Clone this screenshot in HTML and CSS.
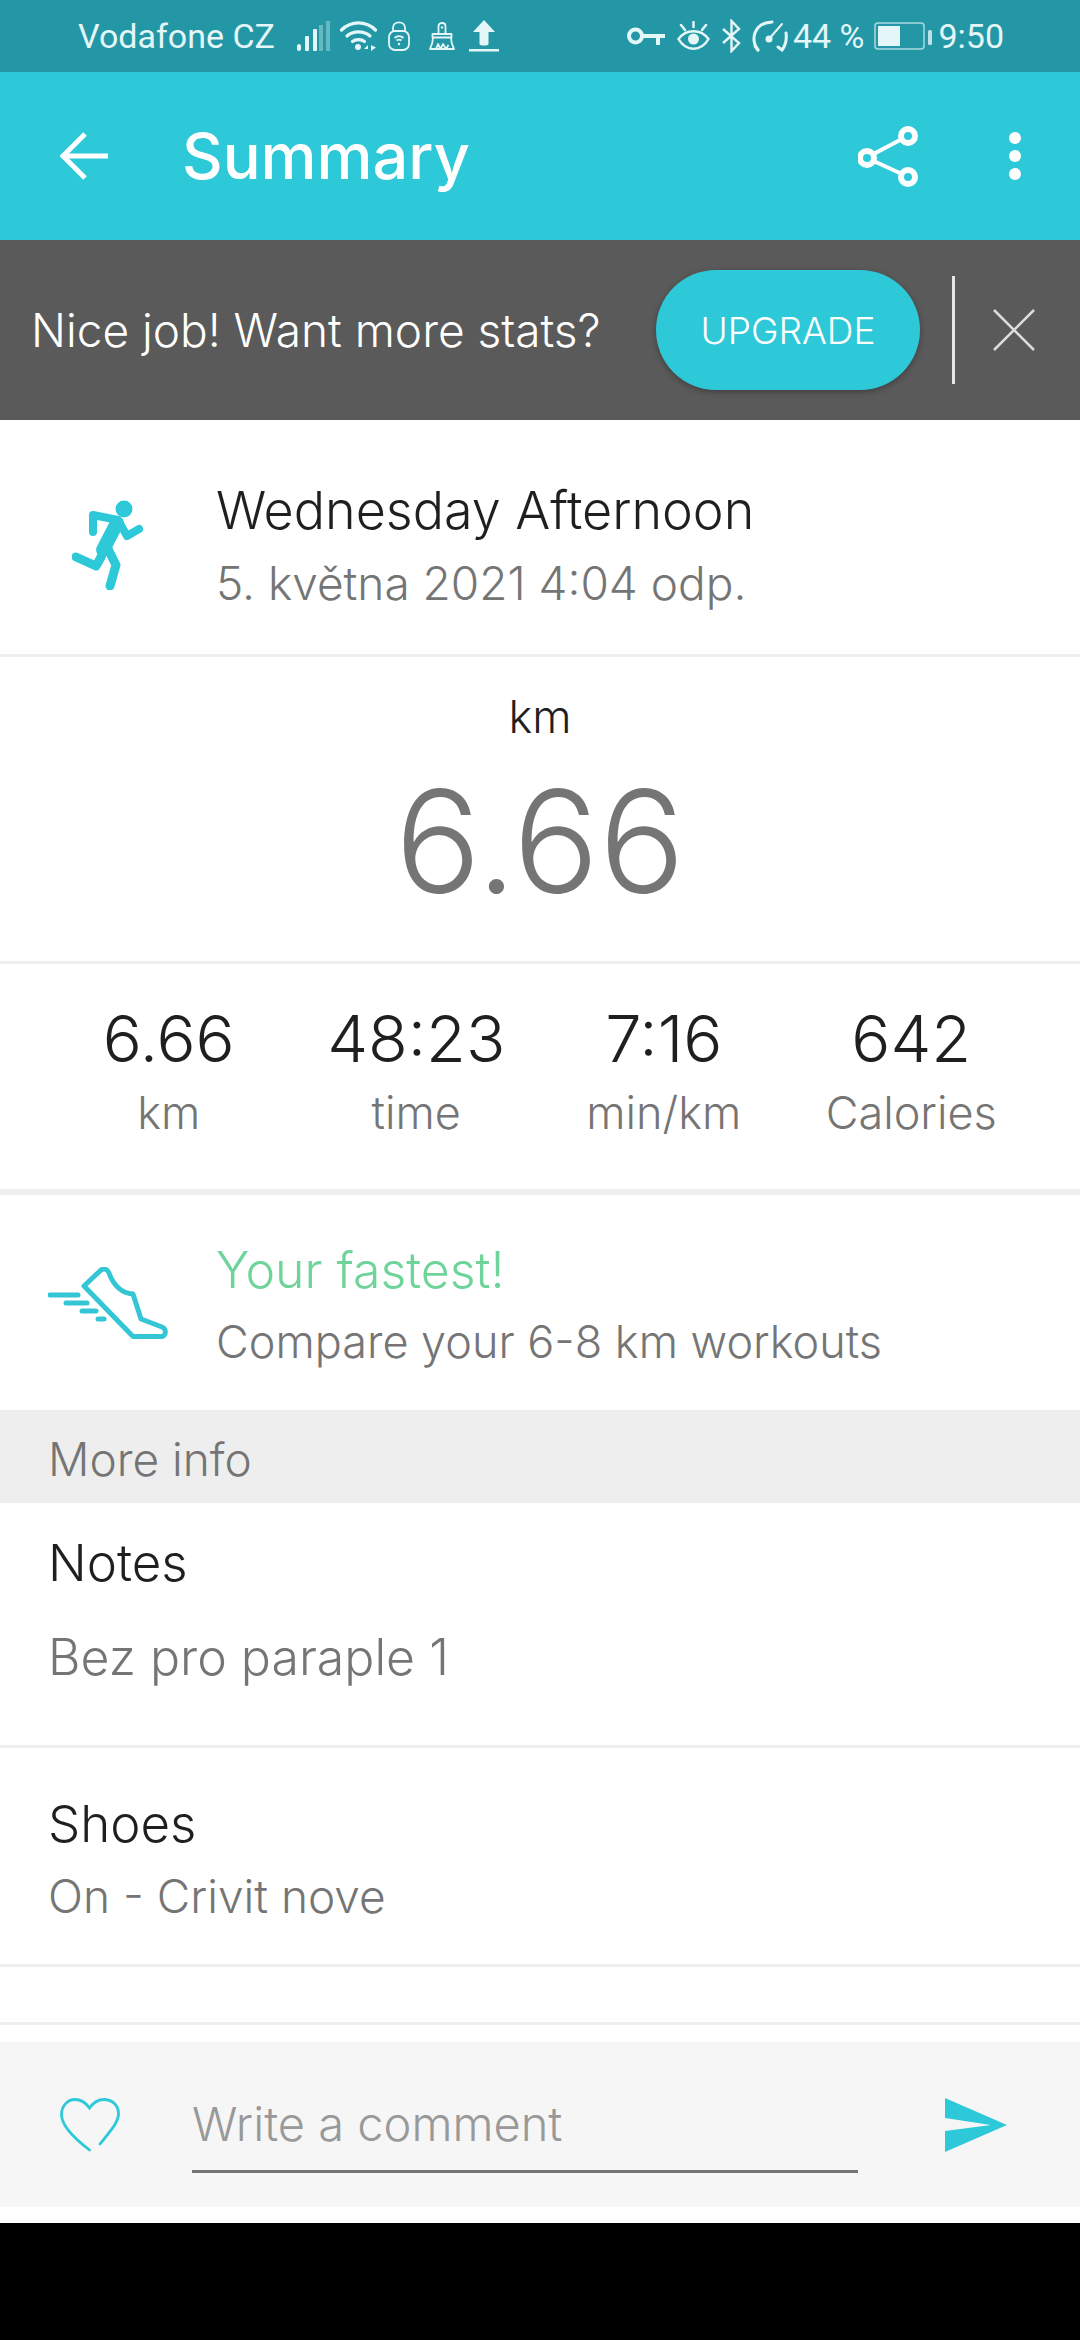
FILE: index.html
```html
<!DOCTYPE html>
<html lang="en">
<head>
  <meta charset="UTF-8">
  <title>Summary</title>
  <link rel="stylesheet" href="styles.css">
</head>
<body>
  <div class="status-bar">
    <div class="status-left">
      <span>Vodafone CZ</span>
      <svg class="st-signal" width="33" height="30" viewBox="0 0 33 30" fill="currentColor">
        <rect x="0" y="23" width="4" height="7" rx="2"/><rect x="8" y="15" width="4" height="15" rx="1"/><rect x="16" y="8" width="4" height="22" rx="1"/><rect x="22" y="4" width="4" height="26" opacity=".35"/><rect x="29" y="0" width="4" height="30" opacity=".35"/>
      </svg>
      <svg class="st-wifi" width="37" height="30" viewBox="0 0 37 30" fill="none" stroke="currentColor" stroke-width="3.200" stroke-linecap="round">
        <path d="M1.500 9C11 -0.500 26 -0.500 35.500 9"/><path d="M7 15C13 9.500 24 9.500 30 15"/><path d="M12.500 20.500C15.500 18 21.500 18 24.500 20.500"/><circle cx="18" cy="26" r="3" fill="currentColor" stroke="none"/>
        <path d="M28 24L24 28H28ZM31 24V30L36 26.500Z" fill="currentColor" stroke="none"/>
      </svg>
      <svg class="st-lock" width="22" height="30" viewBox="0 0 22 30" fill="none" stroke="currentColor" stroke-width="1.800">
        <rect x="1" y="10" width="20" height="19" rx="6"/><path d="M5 10V7C5 -0.500 17 -0.500 17 7V10"/><path d="M6.500 17C9 14.500 13 14.500 15.500 17M8.500 19.500C10 18.500 12 18.500 13.500 19.500"/><circle cx="11" cy="23" r="1.200" fill="currentColor" stroke="none"/>
      </svg>
      <svg class="st-brush" width="26" height="28" viewBox="0 0 26 28" fill="none" stroke="currentColor" stroke-width="1.800" stroke-linejoin="round">
        <path d="M9.500 12V4C9.500 0 16.500 0 16.500 4V12"/><rect x="3.500" y="12" width="19" height="3.500"/><path d="M4 15.500C4 21 2.500 24 1 27H25C23.500 24 22 21 22 15.500"/><path d="M7 27L9 22L11.500 27L14 22L17 27L19.500 23"/><circle cx="13" cy="5.500" r="1.200" fill="currentColor" stroke="none"/>
      </svg>
      <svg width="30" height="32" viewBox="0 0 30 32" fill="currentColor">
        <path d="M15 0L26 12H19.500V24C19.500 26 10.500 26 10.500 24V12H4Z"/><rect x="0" y="29" width="30" height="2.500"/>
      </svg>
    </div>
    <div class="status-right">
      <svg width="38" height="18" viewBox="0 0 38 18" fill="none" stroke="currentColor" stroke-width="4">
        <circle cx="8.500" cy="9" r="6.500"/><path d="M15 9H38M31 9V18" />
      </svg>
      <svg class="st-eye" width="33" height="30" viewBox="0 0 33 30" fill="none" stroke="currentColor" stroke-width="2.500" stroke-linecap="round">
        <path d="M1.500 18C9 7.500 24 7.500 31.500 18C24 31 9 31 1.500 18Z"/><circle cx="16.500" cy="18" r="5.500" fill="currentColor" stroke="none"/><path d="M16.500 1V6M4 4L8 9M29 4L25 9"/>
      </svg>
      <svg class="st-bt" width="19" height="34" viewBox="0 0 19 34" fill="none" stroke="currentColor" stroke-width="2.400">
        <path d="M1 10L17 24L9.500 32V2L17 10L1 24"/>
      </svg>
      <svg width="37" height="34" viewBox="0 0 37 34" fill="none" stroke="currentColor" stroke-width="3" stroke-linecap="round">
        <path d="M7 31C-1 20 3 4 21 3"/><path d="M35 14C36 21 34 27 31 31L27 28"/><path d="M7 31L4 27"/><circle cx="18" cy="20" r="3.500" fill="currentColor" stroke="none"/><path d="M18 20L31 5" stroke-width="2"/>
      </svg>
      <span class="st-pct">44 %</span>
      <svg width="58" height="28" viewBox="0 0 58 28" fill="none">
        <rect x="1" y="1" width="49" height="26" rx="3" stroke="currentColor" stroke-width="1.500" opacity=".7"/><rect x="4" y="4" width="22" height="20" fill="currentColor"/><rect x="54" y="8" width="4" height="15" rx="1.500" fill="currentColor" opacity=".8"/>
      </svg>
      <span class="st-time">9:50</span>
    </div>
  </div>

  <header class="app-bar">
    <svg class="back" width="48" height="48" viewBox="0 0 48 48" fill="none" stroke="#fff" stroke-width="5">
      <path d="M48 24H3M25 2L3 24L25 46"/>
    </svg>
    <h1>Summary</h1>
    <svg class="share" width="62" height="62" viewBox="0 0 62 62" fill="none" stroke="#fff" stroke-width="6">
      <circle cx="50" cy="11" r="7"/><circle cx="9" cy="33" r="7"/><circle cx="50" cy="52" r="7"/><path d="M15.500 29L44 14M15.500 36L44 49" stroke-width="4"/>
    </svg>
    <svg class="more" width="12" height="48" viewBox="0 0 12 48" fill="#fff">
      <circle cx="6" cy="6" r="6"/><circle cx="6" cy="24" r="6"/><circle cx="6" cy="42" r="6"/>
    </svg>
  </header>

  <div class="banner">
    <span class="banner-text">Nice job! Want more stats?</span>
    <button class="upgrade">UPGRADE</button>
    <div class="banner-sep"></div>
    <svg class="banner-close" width="42" height="42" viewBox="0 0 42 42" fill="none" stroke="#ddd" stroke-width="2.500">
      <path d="M1 1L41 41M41 1L1 41"/>
    </svg>
  </div>

  <section class="activity">
    <svg class="runner" width="71" height="90" viewBox="0 0 71 90" fill="none" stroke="#2ec9d8" stroke-width="8" stroke-linecap="round" stroke-linejoin="round">
      <circle cx="52" cy="9" r="8.500" fill="#2ec9d8" stroke="none"/>
      <path d="M21 32V15L46 20L55 36L67 29"/>
      <path d="M45 23L31 50" stroke-width="14"/>
      <path d="M46 21L28 59L24 66L4 57" stroke-width="9"/>
      <path d="M35 47L44 65L38 86" stroke-width="9"/>
    </svg>
    <div class="activity-text">
      <div class="title">Wednesday Afternoon</div>
      <div class="sub">5. května 2021 4:04 odp.</div>
    </div>
  </section>

  <section class="distance">
    <div class="unit">km</div>
    <div class="big">6.66</div>
  </section>

  <section class="stats">
    <div class="stat"><div class="val">6.66</div><div class="lbl">km</div></div>
    <div class="stat"><div class="val">48:23</div><div class="lbl">time</div></div>
    <div class="stat"><div class="val">7:16</div><div class="lbl">min/km</div></div>
    <div class="stat"><div class="val">642</div><div class="lbl">Calories</div></div>
  </section>

  <section class="fastest">
    <svg class="shoe" width="120" height="72" viewBox="0 0 120 72" fill="none" stroke="#35c6d6" stroke-width="5" stroke-linecap="round" stroke-linejoin="round">
      <path d="M36 19L53 3C56 1 59 2 61 6C65 17 72 26 85 27L93 52L114 60C119 62 118 70 113 69.500H85Z"/>
      <path d="M2 28H30M18 36H39M34 44H48M50 52H56"/>
    </svg>
    <div class="fastest-text">
      <div class="fast-title">Your fastest!</div>
      <div class="sub compare">Compare your 6-8 km workouts</div>
    </div>
  </section>

  <div class="more-info">More info</div>

  <section class="notes">
    <div class="row-title">Notes</div>
    <div class="notes-text">Bez pro paraple 1</div>
  </section>

  <section class="shoes">
    <div class="row-title">Shoes</div>
    <div class="sub">On - Crivit nove</div>
  </section>

  <div class="empty-row"></div>

  <div class="comment-bar">
    <svg class="heart" width="60" height="54" viewBox="0 0 60 54" fill="none" stroke="#2ec9d8" stroke-width="2.800" stroke-linecap="round">
      <path d="M40 46C51 32 59 24 58.500 15C58 6 51 1.500 44 1.500C38 1.500 33 5 29.500 10C26 5 21 1.500 15 1.500C8 1.500 2 7 1.500 16C1 28 15 41 29.500 52"/>
    </svg>
    <div class="comment-input">Write a comment</div>
    <svg class="send" width="62" height="54" viewBox="0 0 62 54" fill="#2ec9d8">
      <polygon points="0,0 62,27 0,54 0,33 46,27 0,20"/>
    </svg>
  </div>

  <div class="nav-space"></div>
</body>
</html>
```

FILE: styles.css
```css
* {
  box-sizing: border-box;
}
body {
  margin: 0;
  background: #fff;
  font-family: Inter, Lato, sans-serif;
  font-weight: 300;
  color: #1f1f1f;
}

/* status bar */
.status-bar {
  height: 72px;
  background: #2397a6;
  color: #e4f6f7;
  font-family: Roboto, sans-serif;
  font-weight: 400;
  font-size: 34px;
  display: flex;
  justify-content: space-between;
  align-items: center;
  padding: 0 76px 0 78px;
}
.status-left, .status-right {
  display: flex;
  align-items: center;
}
.status-left {
  gap: 14px;
}
.status-right {
  gap: 10px;
}
.st-signal {
  margin-left: 8px;
}
.st-wifi {
  margin-left: -4px;
}
.st-lock {
  margin-left: -3px;
}
.st-brush {
  margin-left: 5px;
}
.st-eye, .st-bt {
  margin-left: 2px;
}
.st-pct {
  margin-left: -5px;
}
.st-time {
  margin-left: -4px;
}

/* app bar */
.app-bar {
  height: 168px;
  background: #2ec9d8;
  display: flex;
  align-items: center;
  padding: 0 59px 0 60px;
}
.app-bar h1 {
  margin: 0 0 0 74px;
  font-size: 63px;
  font-weight: 500;
  color: #fff;
  flex: 1;
}
.share {
  margin-right: 89px;
}

/* upsell banner */
.banner {
  height: 180px;
  background: #5a5a5a;
  display: flex;
  align-items: center;
  padding: 0 45px 0 31px;
}
.banner-text {
  color: #fff;
  font-size: 46px;
  flex: 1;
}
.upgrade {
  width: 264px;
  height: 120px;
  border: 0;
  border-radius: 60px;
  background: #2ec9d8;
  color: #fff;
  font-family: inherit;
  font-weight: 300;
  font-size: 37px;
  box-shadow: 0 2px 6px rgba(0,0,0,0.3);
}
.banner-sep {
  width: 3px;
  height: 108px;
  margin: 0 38px 0 32px;
  background: #e6e6e6;
}

/* activity header */
.activity {
  height: 237px;
  display: flex;
  align-items: center;
  padding-left: 72px;
  border-bottom: 3px solid #eee;
}
.runner {
  margin-top: 16px;
  margin-right: 73px;
}
.activity-text {
  padding-top: 20px;
}
.title {
  font-size: 52px;
  line-height: 72px;
}
.sub {
  font-size: 46px;
  line-height: 72px;
  color: #757575;
}

/* distance */
.distance {
  height: 307px;
  text-align: center;
  border-bottom: 3px solid #eee;
}
.unit {
  font-size: 45px;
  line-height: 60px;
  padding-top: 30px;
}
.big {
  font-size: 143px;
  line-height: 170px;
  margin-top: 9px;
  color: #757575;
}

/* stats row */
.stats {
  height: 231px;
  display: grid;
  grid-template-columns: repeat(4, 1fr);
  padding: 37px 45px 0;
  text-align: center;
  border-bottom: 6px solid #eee;
}
.val {
  font-size: 65px;
  line-height: 76px;
}
.lbl {
  font-size: 45px;
  line-height: 60px;
  margin-top: 6px;
  color: #757575;
}

/* fastest */
.fastest {
  height: 215px;
  display: flex;
  align-items: center;
  padding-left: 48px;
}
.shoe {
  margin-right: 48px;
}
.fastest-text {
  padding-top: 6px;
}
.fast-title {
  font-size: 50px;
  line-height: 72px;
  color: #6fd49a;
}
.compare {
  font-size: 45px;
}

.more-info {
  height: 93px;
  background: #eee;
  color: #757575;
  font-size: 46px;
  line-height: 99px;
  padding-left: 48px;
}

/* notes and shoes */
.notes {
  height: 245px;
  padding: 29px 48px 0;
  border-bottom: 3px solid #eee;
}
.row-title {
  font-size: 51px;
  line-height: 62px;
}
.notes-text {
  font-size: 50px;
  line-height: 66px;
  margin-top: 30px;
  color: #757575;
}
.shoes {
  height: 219px;
  padding: 45px 48px 0;
  border-bottom: 3px solid #eee;
}
.shoes .sub {
  margin-top: 5px;
}
.empty-row {
  height: 58px;
  border-bottom: 3px solid #eee;
}

/* comment bar */
.comment-bar {
  height: 165px;
  margin-top: 17px;
  background: #f6f6f6;
  display: flex;
  align-items: center;
  padding: 0 73px 0 60px;
}
.heart {
  margin-right: 72px;
}
.comment-input {
  width: 666px;
  height: 82px;
  margin-top: 14px;
  margin-right: 87px;
  font-size: 47px;
  line-height: 66px;
  color: #999;
  border-bottom: 3px solid #757575;
}
.nav-space {
  height: 117px;
  margin-top: 16px;
  background: #000;
}
```
